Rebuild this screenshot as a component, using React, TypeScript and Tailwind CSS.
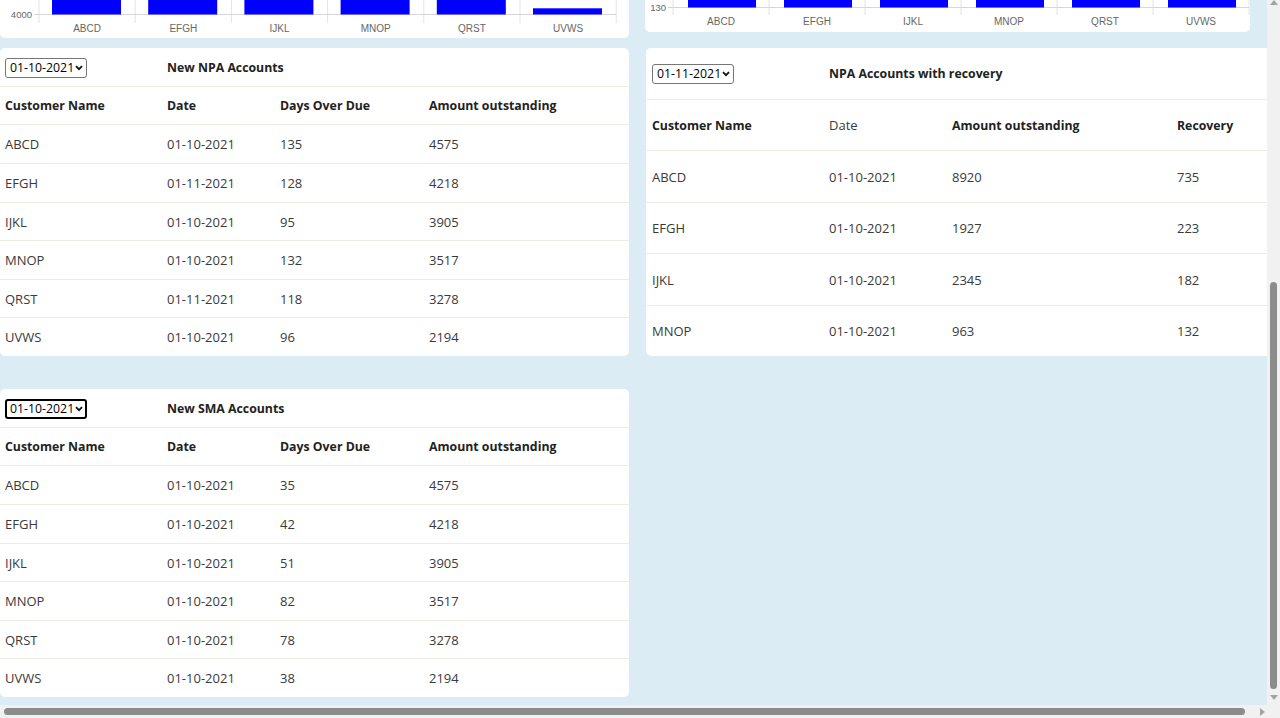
import React from "react";

type Row = string[];

const npaRows: Row[] = [
  ["ABCD", "01-10-2021", "135", "4575"],
  ["EFGH", "01-11-2021", "128", "4218"],
  ["IJKL", "01-10-2021", "95", "3905"],
  ["MNOP", "01-10-2021", "132", "3517"],
  ["QRST", "01-11-2021", "118", "3278"],
  ["UVWS", "01-10-2021", "96", "2194"],
];

const smaRows: Row[] = [
  ["ABCD", "01-10-2021", "35", "4575"],
  ["EFGH", "01-10-2021", "42", "4218"],
  ["IJKL", "01-10-2021", "51", "3905"],
  ["MNOP", "01-10-2021", "82", "3517"],
  ["QRST", "01-10-2021", "78", "3278"],
  ["UVWS", "01-10-2021", "38", "2194"],
];

const recoveryRows: Row[] = [
  ["ABCD", "01-10-2021", "8920", "735"],
  ["EFGH", "01-10-2021", "1927", "223"],
  ["IJKL", "01-10-2021", "2345", "182"],
  ["MNOP", "01-10-2021", "963", "132"],
];

const labels = ["ABCD", "EFGH", "IJKL", "MNOP", "QRST", "UVWS"];

function ChartStrip({
  width,
  height,
  axisY,
  start,
  step,
  barOffset,
  barWidth,
  yLabel,
  labelY,
  tickEnd,
  barTops,
}: {
  width: number;
  height: number;
  axisY: number;
  start: number;
  step: number;
  barOffset: number;
  barWidth: number;
  yLabel: string;
  labelY: number;
  tickEnd: number;
  barTops: number[];
}) {
  return (
    <svg width={width} height={height} className="block">
      {/* grid lines and ticks under the x axis */}
      {Array.from({ length: 7 }).map((_, i) => (
        <line
          key={i}
          x1={start + i * step}
          x2={start + i * step}
          y1={0}
          y2={tickEnd}
          stroke="#e4e4e4"
          strokeWidth={1}
        />
      ))}
      <line x1={start - 5} x2={start + 6 * step} y1={axisY} y2={axisY} stroke="#d6d6d6" />
      <text
        x={start - 7}
        y={axisY + 3.5}
        textAnchor="end"
        fontSize={9.5}
        fill="#666"
        fontFamily="'Liberation Sans', Arial, sans-serif"
      >
        {yLabel}
      </text>
      {labels.map((l, i) => (
        <g key={l}>
          <rect
            x={start + i * step + barOffset}
            y={barTops[i]}
            width={barWidth}
            height={axisY - barTops[i]}
            fill="#0000ff"
          />
          <text
            x={start + i * step + step / 2}
            y={labelY}
            textAnchor="middle"
            fontSize={10}
            fill="#666"
            fontFamily="'Liberation Sans', Arial, sans-serif"
          >
            {l}
          </text>
        </g>
      ))}
    </svg>
  );
}

function DateSelect({ value, focused }: { value: string; focused?: boolean }) {
  return (
    <div
      className={
        "flex h-[20px] w-[82px] items-center justify-between whitespace-nowrap rounded-[3px] bg-white text-[12.3px] text-black " +
        (focused ? "border-2 border-black pl-[3px] pr-[2px]" : "border border-[#767676] pl-[4px] pr-[3px]")
      }
    >
      <span className="shrink-0">{value}</span>
      <svg width="8" height="6" viewBox="0 0 8 6" className="shrink-0">
        <path d="M1 1.2 L4 4.2 L7 1.2" fill="none" stroke="#111" strokeWidth="1.8" />
      </svg>
    </div>
  );
}

function AccountsCard({
  title,
  date,
  focused,
  rows,
}: {
  title: string;
  date: string;
  focused?: boolean;
  rows: Row[];
}) {
  const cols = "grid grid-cols-[162px_113px_149px_1fr] items-center pl-[5px] pt-[2px]";
  return (
    <div className="flex h-[308px] w-[629px] flex-col rounded-[5px] bg-white">
      <div className={cols + " flex-1 border-b border-[#eeebe4]"}>
        <div>
          <DateSelect value={date} focused={focused} />
        </div>
        <div className="col-span-3 text-[12.3px] font-bold text-[#222]">{title}</div>
      </div>
      <div className={cols + " flex-1 border-b border-[#eeebe4] text-[12.3px] font-bold text-[#222]"}>
        <div>Customer Name</div>
        <div>Date</div>
        <div>Days Over Due</div>
        <div>Amount outstanding</div>
      </div>
      {rows.map((r, i) => (
        <div
          key={r[0]}
          className={cols + " flex-1 text-[#3a3a3a] " + (i < rows.length - 1 ? "border-b border-[#eeebe4]" : "")}
        >
          {r.map((c, j) => (
            <div key={j}>{c}</div>
          ))}
        </div>
      ))}
    </div>
  );
}

function RecoveryCard() {
  const cols = "grid grid-cols-[177px_123px_225px_1fr] items-center pl-[6px] pt-[2px]";
  return (
    <div className="flex h-[308px] w-[629px] flex-col rounded-[5px] bg-white">
      <div className={cols + " flex-1 border-b border-[#eeebe4]"}>
        <div>
          <DateSelect value="01-11-2021" />
        </div>
        <div className="col-span-3 text-[12.3px] font-bold text-[#222]">NPA Accounts with recovery</div>
      </div>
      <div className={cols + " flex-1 border-b border-[#eeebe4] text-[#222]"}>
        <div className="text-[12.3px] font-bold">Customer Name</div>
        <div className="text-[#3a3a3a]">Date</div>
        <div className="text-[12.3px] font-bold">Amount outstanding</div>
        <div className="text-[12.3px] font-bold">Recovery</div>
      </div>
      {recoveryRows.map((r, i) => (
        <div
          key={r[0]}
          className={cols + " flex-1 text-[#3a3a3a] " + (i < recoveryRows.length - 1 ? "border-b border-[#eeebe4]" : "")}
        >
          {r.map((c, j) => (
            <div key={j}>{c}</div>
          ))}
        </div>
      ))}
    </div>
  );
}

function Arrow({ dir }: { dir: "up" | "down" | "right" }) {
  const pts =
    dir === "up" ? "0,5 4,0 8,5" : dir === "down" ? "0,0 8,0 4,5" : "0,0 5,4 0,8";
  const w = dir === "right" ? 5 : 8;
  const h = dir === "right" ? 8 : 5;
  return (
    <svg width={w} height={h}>
      <polygon points={pts} fill="#a3a3a3" />
    </svg>
  );
}

export default function App() {
  return (
    <div
      className="flex h-[718px] w-[1280px] flex-col overflow-hidden bg-[#f1f1f1] text-[13px]"
      style={{ fontFamily: "'Segoe UI', 'Open Sans', 'Noto Sans', sans-serif" }}
    >
      <div className="flex min-h-0 flex-1">
        <main className="min-w-0 flex-1 overflow-hidden bg-[#dbecf4]">
          <div className="flex w-[1300px] gap-[17px]">
            <div className="flex w-[629px] flex-col">
              <div className="h-[38px] overflow-hidden rounded-b-[5px] bg-white">
                <ChartStrip
                  width={629}
                  height={38}
                  axisY={14.5}
                  start={39}
                  step={96.2}
                  barOffset={13}
                  barWidth={69}
                  yLabel="4000"
                  labelY={31.5}
                  tickEnd={23}
                  barTops={[0, 0, 0, 0, 0, 8.3]}
                />
              </div>
              <div className="mt-[10px]">
                <AccountsCard title="New NPA Accounts" date="01-10-2021" rows={npaRows} />
              </div>
              <div className="mt-[33px]">
                <AccountsCard title="New SMA Accounts" date="01-10-2021" focused rows={smaRows} />
              </div>
            </div>
            <div className="flex w-[629px] flex-col">
              <div className="-ml-[1px] h-[32px] w-[605px] overflow-hidden rounded-b-[5px] bg-white">
                <ChartStrip
                  width={605}
                  height={32}
                  axisY={7.5}
                  start={28}
                  step={96}
                  barOffset={15}
                  barWidth={68}
                  yLabel="130"
                  labelY={24.5}
                  tickEnd={15}
                  barTops={[0, 0, 0, 0, 0, 0]}
                />
              </div>
              <div className="mt-[16px]">
                <RecoveryCard />
              </div>
            </div>
          </div>
        </main>
        <div className="flex w-[13px] flex-col items-center bg-[#f1f1f1]">
          <div className="flex h-[13px] items-start justify-center">
            <Arrow dir="up" />
          </div>
          <div className="h-[269px]" />
          <div className="h-[407px] w-[7px] rounded-full bg-[#8c8c8c]" />
          <div className="flex flex-1 items-center justify-center">
            <Arrow dir="down" />
          </div>
        </div>
      </div>
      <div className="flex h-[13px] items-center bg-[#f1f1f1]">
        <div className="ml-[4px] h-[7px] w-[1241px] rounded-full bg-[#8c8c8c]" />
        <div className="ml-[12px] flex w-[10px] justify-center">
          <Arrow dir="right" />
        </div>
      </div>
    </div>
  );
}
